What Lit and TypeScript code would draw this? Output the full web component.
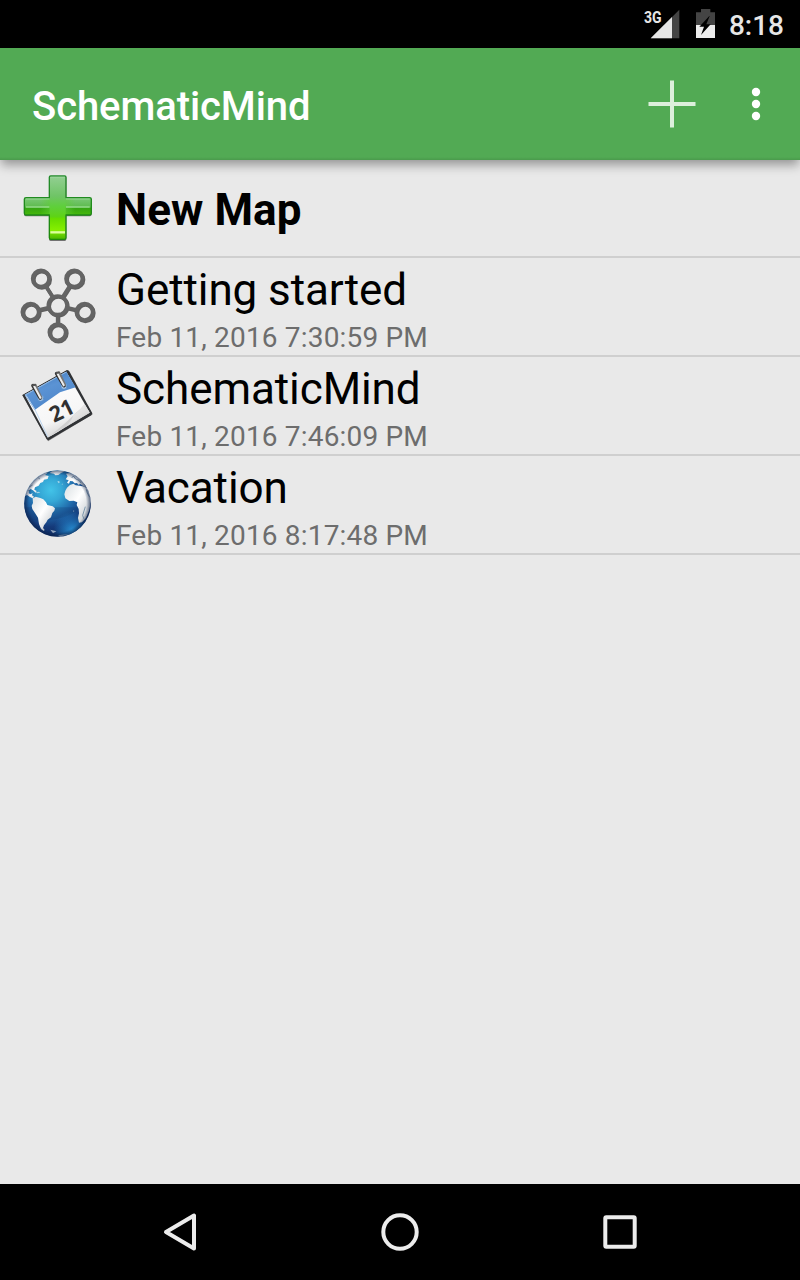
import { LitElement, html, svg, css } from "lit";
import { customElement } from "lit/decorators.js";

const plusIcon = html`<svg class="icon" viewBox="18 3 252 252">
  <defs>
    <linearGradient id="pv" x1="0" y1="0" x2="0" y2="1">
      <stop offset="0" stop-color="#93cf93" /><stop offset=".32" stop-color="#6fc466" />
      <stop offset=".48" stop-color="#5fcf3c" /><stop offset=".65" stop-color="#5ed315" />
      <stop offset=".67" stop-color="#66dc00" /><stop offset=".86" stop-color="#86ef00" />
      <stop offset=".91" stop-color="#6ed800" /><stop offset="1" stop-color="#4db800" />
    </linearGradient>
    <linearGradient id="ph" x1="0" y1="0" x2="0" y2="1">
      <stop offset="0" stop-color="#7cc878" /><stop offset=".55" stop-color="#5cbb4c" />
      <stop offset=".6" stop-color="#35a512" /><stop offset="1" stop-color="#47b80b" />
    </linearGradient>
    <linearGradient id="pe" x1="0" y1="0" x2="0" y2="1">
      <stop offset="0" stop-color="#238b2c" /><stop offset="1" stop-color="#1d8a09" />
    </linearGradient>
    <linearGradient id="pf" x1="0" y1="0" x2="1" y2="0">
      <stop offset="0" stop-color="#5fce36" stop-opacity="0" /><stop offset=".35" stop-color="#5fce36" />
      <stop offset=".65" stop-color="#5fce36" /><stop offset="1" stop-color="#5fce36" stop-opacity="0" />
    </linearGradient>
    <filter id="pb" x="-20%" y="-20%" width="140%" height="140%"><feGaussianBlur stdDeviation="2" /></filter>
  </defs>
  <path d="M121 33H165Q169 33 169 38V99H240Q245 99 245 104V148Q245 154 240 154H169V222Q169 228 164 228H122Q117 228 117 222V154H47Q42 154 42 148V104Q42 99 47 99H117V38Q117 33 121 33Z" fill="#555" opacity=".8" filter="url(#pb)" />
  <path d="M47 98H240Q244 98 244 102V146Q244 150 240 150H47Q43 150 43 146V102Q43 98 47 98Z" fill="url(#ph)" />
  <path d="M90 102H196V148H90Z" fill="url(#pf)" opacity=".7" />
  <path d="M119 33H167V222H119Z" fill="url(#pv)" />
  <path d="M122 33H164Q168 33 168 37V98H239Q244 98 244 103V145Q244 150 239 150H168V218Q168 223 163 223H123Q118 223 118 218V150H48Q43 150 43 145V103Q43 98 48 98H118V37Q118 33 122 33Z" fill="none" stroke="url(#pe)" stroke-width="4" stroke-linejoin="round" />
  <path d="M121 36H165M48 102H118M168 102H239" stroke="#b6e2b5" stroke-width="2" opacity=".8" />
  <path d="M48 126H118M168 126H239" stroke="#a6e39d" stroke-width="5" opacity=".75" />
  <path d="M121 202H165" stroke="#dcff9b" stroke-width="7" />
</svg>`;

const nodes = [[93, 62], [193, 62], [62, 162], [224, 162], [143, 223]];
const mindIcon = html`<svg class="icon" viewBox="18 18 252 252">
  <defs><filter id="nb" x="-20%" y="-20%" width="140%" height="140%"><feGaussianBlur stdDeviation="1.6" /></filter></defs>
  ${[0, 1].map(
    (layer) => svg`<g fill="none" stroke=${layer ? "#646464" : "#333"} stroke-width="12"
      transform=${layer ? "" : "translate(2.5 3)"} filter=${layer ? "none" : "url(#nb)"} opacity=${layer ? 1 : 0.75}>
      <path d="M107 84L128 117M179 84L158 117M88 155L114 149M198 155L172 149M143 173V198" stroke-width="11" />
      <circle cx="143" cy="142" r="28" stroke-width="11" />
      ${nodes.map(([x, y]) => svg`<circle cx=${x} cy=${y} r="24.5" />`)}
    </g>`
  )}
</svg>`;

const calendarIcon = html`<svg class="icon" viewBox="18 15 252 252">
  <defs>
    <linearGradient id="cb" x1="0" y1="0" x2=".5" y2="1">
      <stop offset="0" stop-color="#3873b9" /><stop offset=".5" stop-color="#5b93d4" /><stop offset="1" stop-color="#4c85c9" />
    </linearGradient>
    <linearGradient id="cp" x1=".4" y1="0" x2=".8" y2="1">
      <stop offset="0" stop-color="#fff" /><stop offset=".65" stop-color="#f6f6f6" /><stop offset="1" stop-color="#c3c3c3" />
    </linearGradient>
    <linearGradient id="cc" x1="0" y1="0" x2="1" y2="1">
      <stop offset="0" stop-color="#8d8d8d" /><stop offset=".3" stop-color="#f6f6f6" /><stop offset="1" stop-color="#bdbdbd" />
    </linearGradient>
    <filter id="cs" x="-20%" y="-20%" width="140%" height="140%"><feGaussianBlur stdDeviation="1.8" /></filter>
  </defs>
  <path d="M37 112L172 37L248 169L114 250Z" fill="#333" opacity=".6" filter="url(#cs)" />
  <path d="M37 111L171 36L177 38L247 166L244 172L115 247L110 244Z" fill="#303235" />
  <path d="M44 110L169 41L239 164L113 239Z" fill="url(#cp)" />
  <path d="M44 110L169 41L197 88L150 103L74 156Z" fill="url(#cb)" />
  <path d="M46 111L169 42" stroke="#8fb7e2" stroke-width="3" />
  <path d="M48 112L75 155L113 236" fill="none" stroke="#bcd5ef" stroke-width="3" />
  <path d="M113 239Q171 193 193 169Q215 151 224 138L239 164Z" fill="#cfcfcf" />
  <path d="M113 238Q182 206 190 171Q209 160 223 139L239 163Z" fill="url(#cc)" opacity=".85" />
  <text class="day" transform="translate(132 195) rotate(-26)" textLength="74" lengthAdjust="spacingAndGlyphs">21</text>
  <g fill="none" stroke-linecap="round">
    <circle cx="92" cy="121" r="9" fill="#a9c8ea" stroke="#568bc4" stroke-width="2" />
    <circle cx="162" cy="85" r="9" fill="#a9c8ea" stroke="#568bc4" stroke-width="2" />
    <path d="M69 83L91 120M140 47L162 83" stroke="#333" stroke-width="11" />
    <path d="M76 82L93 119M148 46L164 80" stroke="#777" stroke-width="8" />
    <path d="M72 84L91 119M143 48L161 82" stroke="#eee" stroke-width="6" />
    <path d="M69 82L76 80M140 45L147 43" stroke="#555" stroke-width="6" />
  </g>
</svg>`;

const globeIcon = html`<svg class="icon" viewBox="18 15 252 252">
  <defs>
    <radialGradient id="go" cx=".4" cy=".3" r=".68">
      <stop offset="0" stop-color="#42c3e8" /><stop offset=".25" stop-color="#35a8d6" />
      <stop offset=".55" stop-color="#1f66a8" /><stop offset=".8" stop-color="#153b7b" /><stop offset="1" stop-color="#0f2d64" />
    </radialGradient>
    <radialGradient id="gg" cx=".72" cy=".9" r=".28">
      <stop offset="0" stop-color="#2a96dc" stop-opacity=".9" /><stop offset="1" stop-color="#2496df" stop-opacity="0" />
    </radialGradient>
    <linearGradient id="gl" x1="0" y1="0" x2="1" y2="1">
      <stop offset="0" stop-color="#d9dfe2" /><stop offset=".45" stop-color="#fff" /><stop offset="1" stop-color="#b5bbc1" />
    </linearGradient>
    <radialGradient id="ge" cx=".5" cy=".5" r=".5">
      <stop offset=".86" stop-color="#0b2148" stop-opacity="0" /><stop offset="1" stop-color="#0b2148" stop-opacity=".65" />
    </radialGradient>
    <clipPath id="gc"><circle cx="142.500" cy="139.500" r="100" /></clipPath>
  </defs>
  <circle cx="142.500" cy="139.500" r="100" fill="url(#go)" />
  <g clip-path="url(#gc)">
    <path d="M40 151H214Q188 176 143 185Q86 197 53 185Z" fill="#123870" opacity=".28" />
    <circle cx="142.500" cy="139.500" r="100" fill="url(#gg)" />
    <g fill="url(#gl)">
      <path d="M45 117L51 87L78 58L105 45L112 48L105 54L116 57L113 66L102 68L99 75L91 78L86 86L75 91L73 98L80 102L77 107L69 100L62 96L57 100L56 109L62 112L68 108L66 115L72 119L68 124L60 120L51 114Z" />
      <path d="M68 124L77 119L91 123L100 127L108 136L112 144L128 148L135 154L133 161L127 168L123 181L113 188L109 196L102 205L99 213L104 219L101 222L93 216L87 201L84 182L75 168L67 156L65 146L69 138Z" />
      <path d="M119 48L127 41L156 39L165 43L153 48L145 54L136 55L132 50Z" />
      <path d="M102 43L119 39L113 47L104 47Z" />
      <path d="M167 67L173 58L168 50L178 48L187 49L202 59L217 71L229 90L223 89L211 81L205 83L201 78L194 79L188 73L180 72L177 80L171 77L176 70Z" />
    </g>
    <path d="M171 92L180 84L190 80L197 85L208 86L218 88L232 93L240 111L243 131L238 159L228 183L216 196L207 197L204 183L207 169L206 156L200 144L202 136L191 131L178 132L166 124L163 112L166 101Z" fill="url(#gl)" />
    <path d="M142 73L147 72L150 76L145 79ZM154 81L159 80L158 83ZM77 106L86 104L91 107L82 109ZM121 218L139 223L129 229ZM144 235L180 230L151 239ZM190 160L193 162L190 165Z" fill="#e6eef2" opacity=".6" />
    <path d="M229 97L232 108L238 119M226 149L218 175L221 185M185 63L190 57L197 66L207 70L213 78" fill="none" stroke="#4c7291" stroke-width="2.500" opacity=".8" />
    <path d="M56 91L68 84M85 63L90 66M60 105L54 100" stroke="#51758d" stroke-width="3" opacity=".6" />
    <circle cx="142.500" cy="139.500" r="100" fill="url(#ge)" />
  </g>
</svg>`;

const maps = [
  { icon: mindIcon, name: "Getting started", date: "Feb 11, 2016 7:30:59 PM" },
  { icon: calendarIcon, name: "SchematicMind", date: "Feb 11, 2016 7:46:09 PM" },
  { icon: globeIcon, name: "Vacation", date: "Feb 11, 2016 8:17:48 PM" },
];

@customElement("app-root")
export class AppRoot extends LitElement {
  static styles = css`
    :host { display: flex; flex-direction: column; width: 800px; height: 1280px; overflow: hidden; background: #e9e9e9; font-family: Roboto, "Noto Sans", sans-serif; color: #000; }
    svg { display: block; flex: none; }
    .status { height: 48px; flex: none; box-sizing: border-box; padding-right: 16px; display: flex; justify-content: flex-end; align-items: center; gap: 9px; background: #000; color: #e6e6e6; }
    .clock { font-size: 28px; line-height: 34px; font-weight: 500; padding-top: 4px; }
    .net { font: 700 48px Roboto, sans-serif; fill: #e6e6e6; }
    .day { font: 700 66px "Open Sans", sans-serif; fill: #303030; }
    .bar { height: 112px; flex: none; box-sizing: border-box; padding: 0 16px 0 32px; display: flex; align-items: center; background: linear-gradient(#52aa54 109px, #4a9a4c 112px); position: relative; z-index: 1; box-shadow: 0 6px 10px -1px rgba(0, 0, 0, .36); }
    .title { flex: 1; margin: 0; padding-top: 6px; font-size: 40px; line-height: 48px; font-weight: 500; letter-spacing: -.08px; color: #fff; }
    .list { flex: 1; }
    .row { display: flex; gap: 16px; height: 97px; box-sizing: border-box; padding: 6px 16px 0; }
    .row.new { height: 96px; }
    .rule { height: 2px; background: #cfcfcf; }
    .icon { width: 84px; height: 84px; }
    .name { font-size: 44px; line-height: 52px; letter-spacing: -.08px; white-space: nowrap; }
    .new .name { font-weight: 700; letter-spacing: .1px; padding-top: 18px; }
    .date { font-size: 28px; line-height: 33px; margin-top: 5px; letter-spacing: .18px; color: #6d6d6d; white-space: nowrap; }
    .nav { height: 96px; flex: none; background: #000; display: flex; justify-content: center; }
    .key { width: 220px; height: 96px; fill: none; stroke: #ececec; stroke-width: 4; stroke-linejoin: round; }
  `;

  render() {
    return html`
      <div class="status">
        <svg width="76" height="48" viewBox="42 0 228 144">
          <path d="M148 29V115H62Z" fill="#444" />
          <path d="M126 51V115H62Z" fill="#e6e6e6" />
          <text class="net" x="42" y="68" textLength="53" lengthAdjust="spacingAndGlyphs">3G</text>
          <path d="M198 37H213V27H241V37H255V75H198Z" fill="#444" />
          <path d="M198 75H255V114H198Z" fill="#ececec" />
          <path d="M238 48L208 80H222L213 105L242 73H229L239 48Z" fill="#000" />
        </svg>
        <span class="clock">8:18</span>
      </div>
      <header class="bar">
        <h1 class="title">SchematicMind</h1>
        <svg width="160" height="112" viewBox="624 48 160 112">
          <path d="M672 80.500V127.500M648.500 104H695.500" stroke="#dcefdc" stroke-width="4" />
          <g fill="#fff"><circle cx="756" cy="92" r="4.200" /><circle cx="756" cy="104" r="4.200" /><circle cx="756" cy="116" r="4.200" /></g>
        </svg>
      </header>
      <main class="list">
        <div class="row new">${plusIcon}<div class="name">New Map</div></div>
        <div class="rule"></div>
        ${maps.map(
          (m) => html`<div class="row">${m.icon}<div><div class="name">${m.name}</div><div class="date">${m.date}</div></div></div>
            <div class="rule"></div>`
        )}
      </main>
      <nav class="nav">
        <svg class="key" viewBox="70 1184 220 96"><path d="M166 1232L194 1215.500V1248.500Z" /></svg>
        <svg class="key" viewBox="290 1184 220 96"><circle cx="400" cy="1232" r="16.700" /></svg>
        <svg class="key" viewBox="510 1184 220 96"><rect x="605.300" y="1217.300" width="29.400" height="29.400" rx="1" /></svg>
      </nav>`;
  }
}
